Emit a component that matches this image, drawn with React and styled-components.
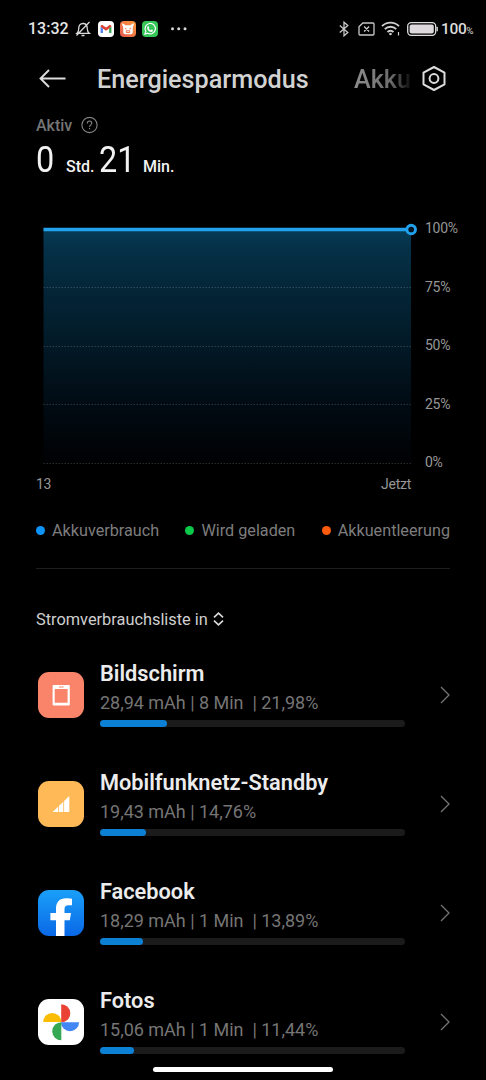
// App.jsx

import React, { useState } from 'react'
import styled, { createGlobalStyle } from 'styled-components'

const GlobalStyle = createGlobalStyle`
  body {
    margin: 0;
    background: #000;
    overflow: hidden;
  }
  * {
    box-sizing: border-box;
  }
`

const Screen = styled.main`
  position: relative;
  display: flex;
  flex-direction: column;
  width: 486px;
  height: 1080px;
  overflow: hidden;
  background: #000;
  color: #e6e6e6;
  font-family: Roboto, 'Liberation Sans', sans-serif;
  white-space: nowrap;
`

const StatusBar = styled.header`
  display: flex;
  flex: none;
  align-items: center;
  justify-content: space-between;
  height: 57px;
  padding: 0 12px 0 28px;
`
const StatusGroup = styled.div`
  display: flex;
  align-items: center;
  gap: ${(props) => props.$gap}px;
`
const Clock = styled.span`
  width: 41px;
  font-size: 16px;
  font-weight: 500;
`
const Charge = styled.span`
  width: 33px;
  margin-left: -3px;
  font-size: 15.5px;
  font-weight: 500;
  color: #dcdcdc;
  letter-spacing: -0.3px;
`
const ChargeUnit = styled.small`
  font-size: 9.5px;
  font-weight: 400;
`

const TitleBar = styled.nav`
  display: flex;
  flex: none;
  align-items: center;
  height: 43px;
  padding: 0 40px 0 39px;
`
const Tab = styled.h1`
  margin: 2px 0 0;
  font-size: 25.2px;
  line-height: 32px;
  font-weight: 500;
  color: #d2d2d2;
`
const ActiveTab = styled(Tab)`
  width: 257px;
  margin-left: 31px;
`
const NextTab = styled(Tab).attrs({ as: 'h2' })`
  width: 60px;
  margin-right: 8px;
  color: transparent;
  background: linear-gradient(90deg, #8e8e8e 0%, #6c6c6c 62%, #0c0c0c 95%);
  background-clip: text;
`

const Summary = styled.section`
  flex: none;
  height: 129px;
  padding: 15px 36px 0;
`
const SummaryLabel = styled.div`
  display: flex;
  align-items: center;
  gap: 9px;
  height: 20px;
  font-size: 16px;
  font-weight: 500;
  color: #757575;
`
const Duration = styled.div`
  display: flex;
  align-items: baseline;
  height: 50px;
  line-height: 50px;
  color: #f2f2f2;
`
const Amount = styled.span`
  width: ${(props) => props.$width}px;
  font-size: 36px;
  transform: scaleX(0.9);
  transform-origin: 0 50%;
`
const Unit = styled.span`
  width: ${(props) => props.$width}px;
  font-size: 16px;
  font-weight: 500;
`

const Chart = styled.section`
  display: grid;
  flex: none;
  grid-template-columns: 376px 1fr;
  grid-template-rows: 234px 41px;
  padding-left: 43px;
  font-size: 14px;
  letter-spacing: -0.25px;
  color: #979797;
`
const Plot = styled.svg`
  display: block;
  overflow: visible;
`
const Levels = styled.div`
  display: flex;
  flex-direction: column;
  justify-content: space-between;
  margin: -9px 0 -8px;
  padding-left: 6px;
`
const Level = styled.span`
  line-height: 17px;
`
const Times = styled.div`
  display: flex;
  justify-content: space-between;
  width: 375px;
  margin-left: -7px;
  padding-top: 11px;
  line-height: 20px;
`

const Legend = styled.div`
  display: flex;
  flex: none;
  justify-content: space-between;
  height: 65px;
  margin: 0 36px;
  padding-top: 16px;
  border-bottom: 1px solid #1e1e1e;
`
const LegendItem = styled.span`
  display: flex;
  align-items: center;
  gap: 7px;
  height: 20px;
  font-size: 16.2px;
  color: #7d7d7d;
  &::before {
    content: '';
    width: 9px;
    height: 9px;
    border-radius: 50%;
    background: ${(props) => props.$color};
  }
`

const SortButton = styled.button`
  display: flex;
  flex: none;
  align-items: center;
  gap: 5px;
  height: 20px;
  margin: 40px 36px 32px;
  padding: 0;
  border: 0;
  background: none;
  color: #cfcfcf;
  font: 400 16.35px Roboto, 'Liberation Sans', sans-serif;
`

const AppList = styled.ul`
  flex: none;
  margin: 0;
  padding: 0;
  list-style: none;
`
const AppRow = styled.li`
  display: grid;
  grid-template-columns: 46px 305px 1fr;
  column-gap: 16px;
  height: 109px;
  padding: 0 36px 0 38px;
`
const AppIcon = styled.svg`
  width: 46px;
  height: 46px;
  margin-top: 11px;
  border-radius: 11px;
`
const AppName = styled.h3`
  margin: 0;
  font-size: 21.75px;
  line-height: 26px;
  font-weight: 600;
  color: #ececec;
`
const AppUsage = styled.p`
  margin: 3px 0 4px;
  font-size: 18px;
  letter-spacing: -0.02px;
  line-height: 26px;
  color: #757575;
  white-space: pre;
`
const Track = styled.div`
  height: 7px;
  border-radius: 4px;
  background: #1b1b1b;
`
const Fill = styled.div`
  height: 7px;
  border-radius: 4px;
  background: #0c80d4;
`
const Arrow = styled.svg`
  justify-self: end;
  margin-top: 25px;
`

const HomeIndicator = styled.div`
  position: absolute;
  left: 153px;
  bottom: 8px;
  width: 180px;
  height: 5px;
  border-radius: 3px;
  background: #fff;
`

const levels = ['100%', '75%', '50%', '25%', '0%']

const legend = [
  { label: 'Akkuverbrauch', color: '#0d94fb' },
  { label: 'Wird geladen', color: '#0cc94a' },
  { label: 'Akkuentleerung', color: '#fc5c0c' },
]

const ScreenIcon = () => (
  <AppIcon viewBox='0 0 46 46'>
    <rect width='46' height='46' fill='#f98469' />
    <path fill='#fff' fillRule='evenodd' d='M15.6 13h15.2q1 0 1 1v18.4q0 1-1 1H15.6q-1 0-1-1V14q0-1 1-1zM16.7 17v13.7h12.9V17zM21 14.4v1.1h4.6v-1.1z' />
  </AppIcon>
)

const NetworkIcon = () => (
  <AppIcon viewBox='0 0 46 46'>
    <rect width='46' height='46' fill='#ffb957' />
    <path fill='#fff' d='M14.5 31l5.6-5.3V31zM20.9 31v-6l4.400-4.200V31zM26.100 31V20l5.200-4.900V31z' />
  </AppIcon>
)

const FacebookIcon = () => (
  <AppIcon viewBox='0 0 46 46'>
    <defs>
      <linearGradient id='fb' x1='0' y1='0' x2='0' y2='1'>
        <stop offset='0' stopColor='#1a9ff9' />
        <stop offset='1' stopColor='#0a68e6' />
      </linearGradient>
    </defs>
    <rect width='46' height='46' fill='url(#fb)' />
    <path fill='#fff' d='M18 46V30.300h-5.600V23H18v-4.300C18 12.200 21.600 8.300 28 8.300c2.500 0 4.600.2 6 .5v6.500h-3.500c-2.900 0-4 1.400-4 3.700v4H33l-1.200 7.300h-5.300V46z' />
  </AppIcon>
)

const PhotosIcon = () => (
  <AppIcon viewBox='0 0 46 46'>
    <rect width='46' height='46' fill='#fff' />
    <path fill='#ea4335' d='M23.200 5.200a9.050 9.050 0 0 1 0 18.100z' />
    <path fill='#fbbc04' d='M5.200 23a9.050 9.050 0 0 1 18.100 0z' />
    <path fill='#4285f4' d='M23 23.200a9.050 9.050 0 0 0 18.100 0z' />
    <path fill='#34a853' d='M23.300 23.200a9.050 9.050 0 0 0 0 18.100z' />
  </AppIcon>
)

const apps = [
  { name: 'Bildschirm', usage: '28,94 mAh | 8 Min  | 21,98%', percent: 22, Icon: ScreenIcon },
  { name: 'Mobilfunknetz-Standby', usage: '19,43 mAh | 14,76%', percent: 15, Icon: NetworkIcon },
  { name: 'Facebook', usage: '18,29 mAh | 1 Min  | 13,89%', percent: 14, Icon: FacebookIcon },
  { name: 'Fotos', usage: '15,06 mAh | 1 Min  | 11,44%', percent: 11, Icon: PhotosIcon },
]

const StatusIcons = () => (
  <>
    <svg width='16' height='16' viewBox='0 0 16 16' fill='none' stroke='#d8d8d8' strokeWidth='1.300'>
      <path d='M2 12.300c1.200-1 1.700-2.300 1.700-4.600C3.700 4.400 5.200 2.500 8 2.500s4.300 1.900 4.300 5.200c0 2.300.6 3.600 1.900 4.600zM6.500 14.500h3M14.500 1L1.500 14.500' />
    </svg>
    <svg width='16' height='16' viewBox='0 0 16 16'>
      <rect width='16' height='16' rx='4' fill='#fff' />
      <path fill='#4a80e8' d='M2.600 5.500l2.300 1.700v4.800H3.200q-.6 0-.6-.6z' />
      <path fill='#34a853' d='M13.400 5.500l-2.300 1.700v4.800h1.700q.6 0 .6-.6z' />
      <path fill='#dc4335' d='M2.600 5.500c0-1.500 1.500-1.900 2.500-1.100L8 6.600l2.900-2.200c1-.8 2.500-.4 2.500 1.100l-2.300 1.900L8 9.700 4.900 7.400z' />
    </svg>
    <svg width='16' height='16' viewBox='0 0 16 16'>
      <defs>
        <linearGradient id='fox' x1='0' y1='1' x2='1' y2='0'>
          <stop offset='0' stopColor='#e9574f' />
          <stop offset='1' stopColor='#f99c3b' />
        </linearGradient>
      </defs>
      <rect width='16' height='16' rx='4' fill='url(#fox)' />
      <path fill='#fff' d='M2.200 2.300q2 .3 3.200 2h5.200q1.200-1.700 3.200-2 .4 2.400-1 4v5q0 2-2 2H5.200q-2 0-2-2v-5q-1.400-1.600-1-4z' />
      <path stroke='#f27748' strokeWidth='1' fill='none' d='M5 7.500l1.500.5M11 7.500L9.500 8M6.300 9.700h3.400v1.800H6.300z' />
    </svg>
    <svg width='16' height='16' viewBox='0 0 16 16'>
      <rect width='16' height='16' rx='4' fill='#35c657' />
      <path fill='none' stroke='#fff' strokeWidth='1.200' d='M3 13l.8-2.700a5.200 5.200 0 1 1 2 1.900z' />
      <path fill='#fff' d='M6.300 4.900l.8 1.500-.5.800q.7 1.400 2 2l.8-.7 1.600.8q0 1.600-1.700 1.600-3.600-.5-4.300-4.200 0-1.300 1.300-1.800z' />
    </svg>
    <svg width='30' height='16' viewBox='0 0 30 16' fill='#d8d8d8'>
      <circle cx='8.500' cy='7.700' r='1.500' />
      <circle cx='14.700' cy='7.700' r='1.500' />
      <circle cx='21' cy='7.700' r='1.500' />
    </svg>
  </>
)

const Bluetooth = styled.svg`
  margin-right: 3px;
`

const SystemIcons = () => (
  <>
    <Bluetooth width='10' height='16' viewBox='0 0 10 16' fill='none' stroke='#c8c8c8' strokeWidth='1.300'>
      <path d='M.8 4.500l8 7L5 14.800V1.200l3.800 3.300-8 7' />
    </Bluetooth>
    <svg width='17' height='14' viewBox='0 0 17 14' fill='none' stroke='#c8c8c8' strokeWidth='1.300'>
      <path d='M4.800 1H15q1 0 1 1v10q0 1-1 1H2q-1 0-1-1V4.700zM6.100 4.500l5 5M11.100 4.500l-5 5' />
    </svg>
    <svg width='20' height='15' viewBox='0 0 20 15' fill='none' stroke='#d0d0d0' strokeWidth='1.900'>
      <path d='M1 5.200a12 12 0 0 1 17 0M3.800 8.200a8 8 0 0 1 11.400 0M6.500 11a4.200 4.200 0 0 1 6 0' />
      <circle cx='9.500' cy='13' r='1.300' fill='#d0d0d0' stroke='none' />
      <path d='M17.500 11v3.500' strokeWidth='1.200' />
    </svg>
    <svg width='31' height='14' viewBox='0 0 31 14'>
      <rect x='.7' y='.7' width='28' height='12.600' rx='3.500' fill='none' stroke='#dedede' strokeWidth='1.300' />
      <rect x='2.600' y='2.600' width='24.200' height='8.800' rx='2' fill='#dcd8dc' />
      <path d='M30.200 5.300v3.400' stroke='#dedede' strokeWidth='1.300' strokeLinecap='round' />
    </svg>
  </>
)

const BatteryPlot = () => (
  <Plot width='368' height='234' viewBox='0 0 368 234'>
    <defs>
      <linearGradient id='area' x1='0' y1='0' x2='0' y2='1'>
        <stop offset='0' stopColor='#063c58' />
        <stop offset='.08' stopColor='#053148' />
        <stop offset='.25' stopColor='#042638' />
        <stop offset='.5' stopColor='#021926' />
        <stop offset='.75' stopColor='#010b13' />
        <stop offset='1' stopColor='#000103' />
      </linearGradient>
    </defs>
    <rect x='.5' width='367.500' height='234' fill='url(#area)' />
    {[58.5, 117.5, 175.5, 234.5].map((y) => (
      <path key={y} d={`M.5 ${y}H368`} stroke='#fff' strokeOpacity='.17' strokeDasharray='1.500 1.500' />
    ))}
    <path d='M.5.500H364' stroke='#22a2ed' strokeWidth='3.600' />
    <circle cx='368.200' cy='.5' r='4.300' fill='#031521' stroke='#22a2ed' strokeWidth='2.900' />
  </Plot>
)

const App = () => {
  const [ascending, setAscending] = useState(false)
  const rows = ascending ? [...apps].reverse() : apps

  return (
    <Screen>
      <GlobalStyle />
      <StatusBar>
        <StatusGroup $gap={6.3}>
          <Clock>13:32</Clock>
          <StatusIcons />
        </StatusGroup>
        <StatusGroup $gap={6}>
          <SystemIcons />
          <Charge>
            100<ChargeUnit>%</ChargeUnit>
          </Charge>
        </StatusGroup>
      </StatusBar>

      <TitleBar>
        <svg width='27' height='20' viewBox='0 0 27 20' fill='none' stroke='#dcdcdc' strokeWidth='1.900'>
          <path d='M26.500 9.500H1.500M10 1L1.500 9.500l8.500 8.500' />
        </svg>
        <ActiveTab>Energiesparmodus</ActiveTab>
        <NextTab>Akku</NextTab>
        <svg width='24' height='26' viewBox='0 0 24 26' fill='none' stroke='#dcdcdc' strokeWidth='2'>
          <path strokeLinejoin='round' d='M12 1l10.500 5.700v11.600L12 24 1.500 18.300V6.700z' />
          <circle cx='12' cy='12.500' r='4.400' />
        </svg>
      </TitleBar>

      <Summary>
        <SummaryLabel>
          Aktiv
          <svg width='17' height='17' viewBox='0 0 17 17' fill='none' stroke='#858585' strokeWidth='1.100'>
            <circle cx='8.500' cy='8' r='7.600' />
            <path d='M6.300 6.400c0-3.200 4.500-3.100 4.500-.3 0 1.800-2.200 1.800-2.200 3.900M8.600 11.100v1.200' />
          </svg>
        </SummaryLabel>
        <Duration>
          <Amount $width={30}>0</Amount>
          <Unit $width={33}>Std.</Unit>
          <Amount $width={44}>21</Amount>
          <Unit $width={40}>Min.</Unit>
        </Duration>
      </Summary>

      <Chart>
        <BatteryPlot />
        <Levels>
          {levels.map((level) => (
            <Level key={level}>{level}</Level>
          ))}
        </Levels>
        <Times>
          <span>13</span>
          <span>Jetzt</span>
        </Times>
      </Chart>

      <Legend>
        {legend.map((item) => (
          <LegendItem key={item.label} $color={item.color}>
            {item.label}
          </LegendItem>
        ))}
      </Legend>

      <SortButton onClick={() => setAscending(!ascending)}>
        Stromverbrauchsliste in
        <svg width='11' height='14' viewBox='0 0 11 14' fill='none' stroke='#dcdcdc' strokeWidth='1.600'>
          <path d='M1 5.300l4.500-4.200L10 5.300M1 8.700l4.500 4.200L10 8.700' />
        </svg>
      </SortButton>

      <AppList>
        {rows.map(({ name, usage, percent, Icon }) => (
          <AppRow key={name}>
            <Icon />
            <div>
              <AppName>{name}</AppName>
              <AppUsage>{usage}</AppUsage>
              <Track>
                <Fill style={{ width: `${percent}%` }} />
              </Track>
            </div>
            <Arrow width='10' height='18' viewBox='0 0 10 18' fill='none' stroke='#747474' strokeWidth='1.300'>
              <path d='M1 1l8 8-8 8' />
            </Arrow>
          </AppRow>
        ))}
      </AppList>

      <HomeIndicator />
    </Screen>
  )
}

export default App
